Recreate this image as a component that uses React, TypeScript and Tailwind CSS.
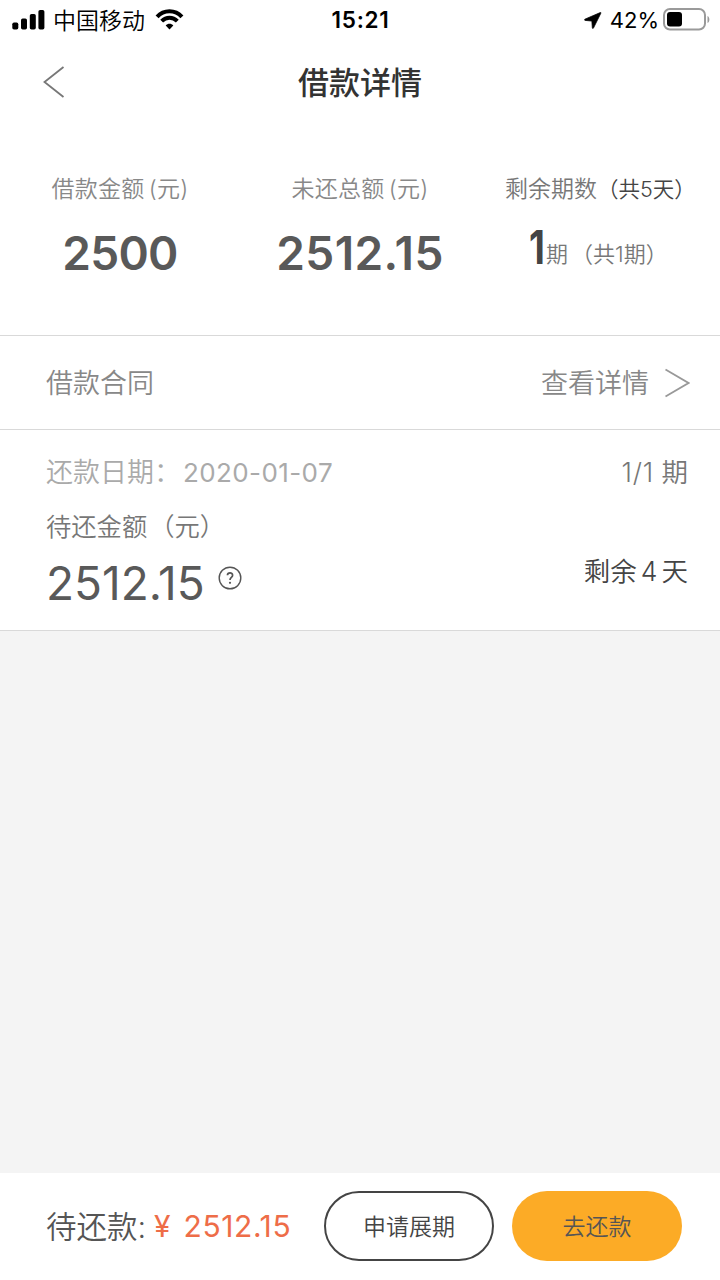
import type { ReactNode } from 'react';

const StatusBar = () => (
  <div className="flex h-10 shrink-0 items-center justify-between pl-3 pr-[9px] text-black">
    <div className="flex w-60 items-center">
      <svg className="mb-px" width="33" height="20" viewBox="0 0 33 20" fill="currentColor">
        <rect x="0.3" y="12.5" width="6" height="7" rx="1.7" />
        <rect x="9" y="8.5" width="6" height="11" rx="1.7" />
        <rect x="17.8" y="4" width="6" height="15.5" rx="1.7" />
        <rect x="26.4" y="0" width="6" height="19.5" rx="1.7" />
      </svg>
      <span className="ml-2 pt-0.5 text-[23px] leading-none">中国移动</span>
      <svg className="mb-px ml-2.5" width="29" height="21" viewBox="0 0 30 22" fill="none" stroke="currentColor" strokeWidth="4.2">
        <path d="M2 8.2C9 0.3 21 0.3 28 8.2" />
        <path d="M6.8 12.8C11.5 8 18.5 8 23.2 12.8" />
        <path d="M15 21.5L11 17.2C13 15 17 15 19 17.2Z" fill="currentColor" stroke="none" />
      </svg>
    </div>
    <span className="mr-0.5 text-[22.5px] font-semibold leading-none tracking-[0.7px]">15:21</span>
    <div className="flex w-60 items-center justify-end">
      <svg width="18" height="17" viewBox="0 0 19 18" fill="currentColor" stroke="currentColor" strokeWidth="0.8">
        <path d="M17.2 0.6L0.9 7.6C0.4 8 0.5 8.9 1.2 8.9L8.3 9.6L8.8 16.8C8.9 17.5 9.7 17.6 10 17L17.8 1.3C18.1 0.7 17.8 0.3 17.2 0.6Z" />
      </svg>
      <span className="ml-2 text-[22px] font-normal leading-none">42%</span>
      <svg className="mb-px ml-1" width="48" height="23" viewBox="0 0 48 23">
        <rect x="1" y="1" width="41" height="20.5" rx="6" fill="none" stroke="#9a9a9a" strokeWidth="2" />
        <rect x="4" y="4" width="15" height="14.5" rx="3" fill="#000" />
        <path d="M44.5 8V15C47 14 47 9 44.5 8Z" fill="#9a9a9a" />
      </svg>
    </div>
  </div>
);

const NavBar = () => (
  <div className="grid h-[84px] shrink-0 grid-cols-[1fr_auto_1fr] items-center">
    <button className="ml-[43px]" aria-label="返回">
      <svg width="22" height="32" viewBox="0 0 22 32" fill="none" stroke="#777" strokeWidth="1.8">
        <path d="M20.5 1L1.5 16L20.5 31" />
      </svg>
    </button>
    <h1 className="text-[31px] font-medium leading-none text-[#333]">借款详情</h1>
    <span />
  </div>
);

interface SummaryItemProps {
  label: string;
  children: ReactNode;
}

const SummaryItem = ({ label, children }: SummaryItemProps) => (
  <div className="flex w-60 flex-col items-center">
    <div className="h-[30px] text-[23px] leading-8 tracking-[0.3px] text-[#888]">
      {label}
      <span className="ml-1">(元)</span>
    </div>
    <div className="mt-[20px] h-[60px] text-[46px] font-semibold leading-[60px] text-[#595959]">{children}</div>
  </div>
);

const Row = ({ children }: { children: ReactNode }) => (
  <div className="flex h-[94px] shrink-0 items-center justify-between border-t border-[#d9d9d9] pl-[46px] pr-[30px] text-[27px] leading-none text-[#888]">
    {children}
  </div>
);

const App = () => {
  return (
    <div className="flex h-[1280px] w-[720px] flex-col overflow-hidden whitespace-nowrap bg-white font-[Inter,'Noto_Sans_CJK_SC',sans-serif] font-[350]">
      <StatusBar />
      <NavBar />

      <section className="flex h-[211px] shrink-0 pt-[49px]">
        <SummaryItem label="借款金额">
          <span className="tracking-[-0.7px]">2500</span>
        </SummaryItem>
        <SummaryItem label="未还总额">
          <span className="tracking-[0.4px]">2512.15</span>
        </SummaryItem>
        <div className="flex w-60 flex-col">
          <div className="ml-[25px] h-[30px] text-[23px] leading-8 text-[#777]">
            剩余期数<span className="text-[21.5px] text-[#444]">（共5天）</span>
          </div>
          <div className="ml-[49px] mt-[21px] flex h-[60px] items-center text-[22px] text-[#777]">
            <span className="w-[17px] origin-left -translate-y-[7px] scale-x-[0.8] text-[46px] font-bold leading-none text-[#444]">1</span>
            <span className="pt-px">
              期<span className="ml-[3px]">（共1期）</span>
            </span>
          </div>
        </div>
      </section>

      <Row>
        <span className="pt-0.5">借款合同</span>
        <div className="flex items-center">
          <span className="pt-0.5">查看详情</span>
          <svg className="ml-4" width="25" height="30" viewBox="0 0 25 30" fill="none" stroke="#999" strokeWidth="1.8">
            <path d="M0.5 1.5L23.5 15L0.5 28.5" />
          </svg>
        </div>
      </Row>

      <section className="flex h-[202px] shrink-0 justify-between border-y border-[#d9d9d9] pl-[46px] pr-8">
        <div>
          <div className="mt-[25px] h-9 text-[27px] leading-9 text-[#aaa]">
            还款日期：<span className="ml-0.5 text-[26px] font-normal tracking-[0.4px]">2020-01-07</span>
          </div>
          <div className="mt-[18px] h-9 text-[25.3px] leading-9 text-[#777]">
            待还金额<span className="ml-0.5">（元）</span>
          </div>
          <div className="mt-2 flex h-[60px] items-center text-[46px] font-normal leading-none text-[#595959]">
            <span>2512.15</span>
            <svg className="mb-2.5 ml-[13px]" width="24" height="24" viewBox="0 0 24 24" fill="none" stroke="#555" strokeWidth="1.4">
              <circle cx="12" cy="12" r="10.8" />
              <path d="M9.4 9.3C9.6 6.2 14.6 6.2 14.6 9.2C14.6 11.4 12 11.4 12 14" strokeWidth="1.7" />
              <circle cx="12" cy="16.8" r="1.1" fill="#555" stroke="none" />
            </svg>
          </div>
        </div>
        <div className="text-right text-[26.5px] leading-9">
          <div className="mt-6 text-[#777]">
            <span className="tracking-[0.8px]">1/1</span> 期
          </div>
          <div className="mt-[63px] text-[#444]">剩余<span className="mx-1">4</span>天</div>
        </div>
      </section>

      <div className="flex-1 bg-[#f4f4f4]" />

      <footer className="flex h-[107px] shrink-0 items-center pb-px pl-[46px]">
        <span className="w-[108px] pt-0.5 text-[30.5px] leading-none text-[#555]">待还款:</span>
        <span className="w-[170px] text-[30px] font-normal leading-none text-[#ee6d48]">
          ¥<span className="ml-[13px] tracking-[0.6px]">2512.15</span>
        </span>
        <button className="h-[70px] w-[170px] rounded-full border-2 border-[#444] pt-0.5 text-[23px] leading-none text-[#444]">申请展期</button>
        <button className="ml-[18px] h-[70px] w-[170px] rounded-full bg-[#fcab26] pt-0.5 text-[23px] leading-none text-[#555]">去还款</button>
      </footer>
    </div>
  );
};

export default App;
